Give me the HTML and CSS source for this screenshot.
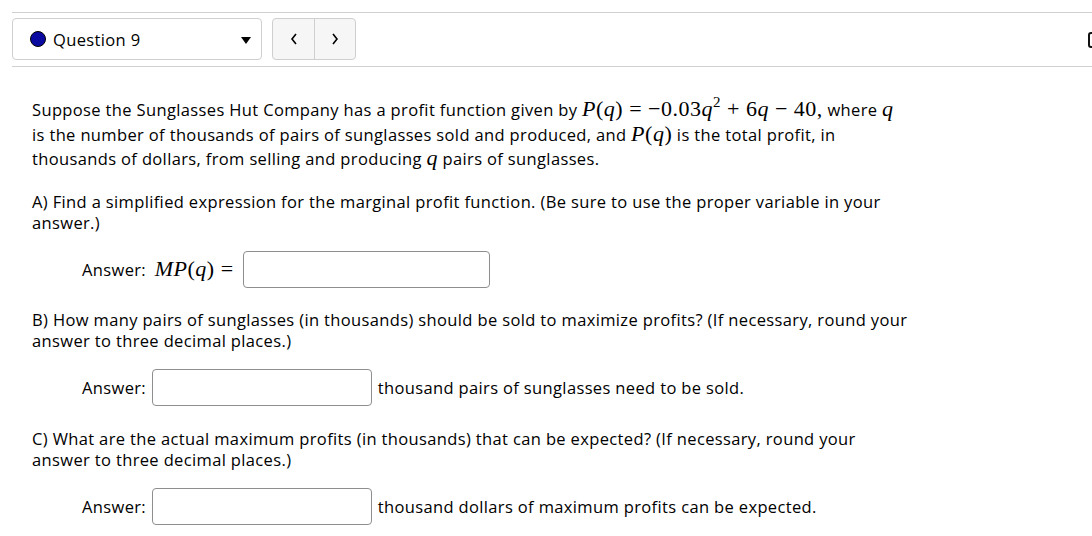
FILE: index.html
```html
<!DOCTYPE html>
<html>
<head>
<meta charset="utf-8">
<link rel="stylesheet" href="styles.css">
</head>
<body>
<div class="topbar">
  <div class="select">
    <span class="dot"></span>
    <span class="qlabel">Question 9</span>
    <span class="caret"></span>
  </div>
  <div class="nav">
    <button class="navbtn"><svg width="10" height="14" viewBox="0 0 10 14"><path d="M7 2 L3 7 L7 12" fill="none" stroke="#000" stroke-width="1.6"/></svg></button>
    <button class="navbtn"><svg width="10" height="14" viewBox="0 0 10 14"><path d="M3 2 L7 7 L3 12" fill="none" stroke="#000" stroke-width="1.6"/></svg></button>
  </div>
  <div class="edgebox"></div>
</div>
<div class="content">
  <p class="para first">Suppose the Sunglasses Hut Company has a profit function given by <span class="m"><i>P</i>(<i>q</i>)<span class="op">=</span>−0.03<i>q</i><sup>2</sup><span class="op">+</span>6<i>q</i><span class="op">−</span>40,</span> where <span class="m"><i>q</i></span><br>is the number of thousands of pairs of sunglasses sold and produced, and <span class="m"><i>P</i>(<i>q</i>)</span> is the total profit, in<br>thousands of dollars, from selling and producing <span class="m"><i>q</i></span> pairs of sunglasses.</p>
  <p class="para">A) Find a simplified expression for the marginal profit function. (Be sure to use the proper variable in your<br>answer.)</p>
  <div class="answer">Answer: <span class="m mp"><i>M</i><i>P</i>(<i>q</i>)<span class="op">=</span></span><span class="box wide"></span></div>
  <p class="para">B) How many pairs of sunglasses (in thousands) should be sold to maximize profits? (If necessary, round your<br>answer to three decimal places.)</p>
  <div class="answer">Answer: <span class="box"></span>thousand pairs of sunglasses need to be sold.</div>
  <p class="para">C) What are the actual maximum profits (in thousands) that can be expected? (If necessary, round your<br>answer to three decimal places.)</p>
  <div class="answer">Answer: <span class="box"></span>thousand dollars of maximum profits can be expected.</div>
</div>
</body>
</html>
```
FILE: styles.css
```css
html, body {
  margin: 0;
  padding: 0;
  overflow: hidden;
  background: #fff;
}
body {
  font-family: "Open Sans", "Noto Sans", sans-serif;
  font-size: 16.5px;
  letter-spacing: 0.36px;
  color: #000;
  padding-top: 12px;
}
.topbar {
  margin-left: 12px;
  border-top: 1px solid #d0d0d0;
  border-bottom: 1px solid #d0d0d0;
  padding: 5px 0 6px 0;
  display: flex;
  align-items: center;
}
.select {
  box-sizing: border-box;
  width: 250px;
  height: 42px;
  border: 1px solid #cfcfcf;
  border-radius: 4px;
  display: flex;
  align-items: center;
  padding-left: 17px;
  padding-right: 10px;
}
.dot {
  box-sizing: border-box;
  width: 16px;
  height: 16px;
  border-radius: 50%;
  background: #0a0aa0;
  border: 1px solid #000;
  margin-right: 7px;
}
.qlabel {
  flex: 1;
}
.caret {
  width: 0;
  height: 0;
  border-left: 5px solid transparent;
  border-right: 5px solid transparent;
  border-top: 7px solid #000;
  margin-top: 2px;
}
.nav {
  margin-left: 10px;
  display: flex;
  height: 42px;
  box-sizing: border-box;
  border: 1px solid #cfcfcf;
  border-radius: 4px;
  background: #f6f6f6;
  overflow: hidden;
}
.navbtn {
  width: 41px;
  border: none;
  background: transparent;
  padding: 0;
  display: flex;
  align-items: center;
  justify-content: center;
}
.navbtn + .navbtn {
  border-left: 1px solid #cfcfcf;
}
.edgebox {
  margin-left: auto;
  margin-right: -12px;
  width: 12px;
  height: 12px;
  border: 2px solid #111;
  border-radius: 3px;
  margin-top: 1px;
}
.content {
  padding: 30px 0 0 32px;
}
.para {
  margin: 0 0 18px 0;
  line-height: 21px;
}
.para.first {
  line-height: 23.5px;
  margin-bottom: 20px;
}
.m {
  font-family: "Liberation Serif", "DejaVu Serif", serif;
  font-size: 22px;
  letter-spacing: 0.5px;
}
.m sup {
  font-size: 15px;
  line-height: 0;
  vertical-align: 9px;
}
.op {
  margin: 0 6px;
}
.answer {
  display: flex;
  align-items: center;
  margin-left: 50px;
  margin-bottom: 21.5px;
  white-space: pre;
}
.mp {
  margin-left: 4px;
}
.mp .op {
  margin-right: 8px;
}
.box {
  box-sizing: border-box;
  width: 220px;
  height: 37px;
  border: 1px solid #8e8e8e;
  border-radius: 4px;
  margin-right: 6px;
  margin-left: 1px;
}
.box.wide {
  width: 247px;
}
```
